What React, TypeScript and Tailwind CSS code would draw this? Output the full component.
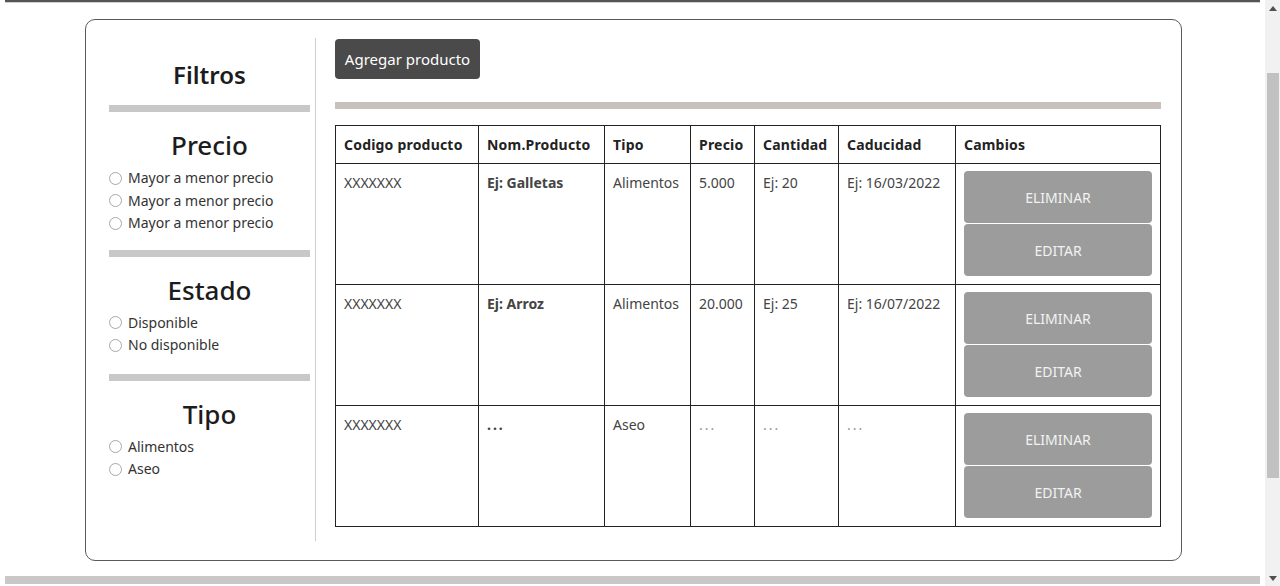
const font = { fontFamily: '"Noto Sans", "Open Sans", sans-serif' };

const Radio = ({ label }: { label: string }) => (
    <label className="flex items-center gap-[6px] text-[14px] leading-[22.5px] text-[#333]">
        <span className="h-[13px] w-[13px] rounded-full border border-[#a8a8a8] bg-white" />
        {label}
    </label>
);

const Bar = ({ className }: { className: string }) => (
    <div className={"h-[7px] bg-[#c8c8c8] " + className} />
);

const FilterGroup = ({ title, options }: { title: string; options: string[] }) => (
    <div>
        <h3 className="mt-[16px] text-center text-[26px] font-medium leading-[34px] text-[#1c1c1c]">{title}</h3>
        <div className="mt-[5px]">
            {options.map((o, i) => (
                <Radio key={i} label={o} />
            ))}
        </div>
    </div>
);

type Row = {
    codigo: string;
    nombre: string;
    tipo: string;
    precio: string;
    cantidad: string;
    caducidad: string;
    faded?: boolean;
};

const rows: Row[] = [
    { codigo: "XXXXXXX", nombre: "Ej: Galletas", tipo: "Alimentos", precio: "5.000", cantidad: "Ej: 20", caducidad: "Ej: 16/03/2022" },
    { codigo: "XXXXXXX", nombre: "Ej: Arroz", tipo: "Alimentos", precio: "20.000", cantidad: "Ej: 25", caducidad: "Ej: 16/07/2022" },
    { codigo: "XXXXXXX", nombre: "...", tipo: "Aseo", precio: "...", cantidad: "...", caducidad: "...", faded: true },
];

const headers = ["Codigo producto", "Nom.Producto", "Tipo", "Precio", "Cantidad", "Caducidad", "Cambios"];
const widths = ["w-[143px]", "w-[126px]", "w-[86px]", "w-[64px]", "w-[84px]", "w-[117px]", "w-[205px]"];

const ProductTable = () => {
    const cell = "border border-[#222] px-[8px] pt-[9px] align-top text-[14px] leading-[20px] text-[#444]";
    const dim = "border border-[#222] px-[8px] pt-[9px] align-top text-[14px] leading-[20px] text-[#999] tracking-[2px]";
    return (
        <table className="w-[825px] table-fixed border-collapse">
            <colgroup>
                {widths.map((w, i) => (
                    <col key={i} className={w} />
                ))}
            </colgroup>
            <thead>
                <tr className="h-[38px]">
                    {headers.map((h, i) => (
                        <th key={i} className="border border-[#222] px-[8px] text-left text-[14px] font-bold tracking-[0.2px] text-[#222]">
                            {h}
                        </th>
                    ))}
                </tr>
            </thead>
            <tbody>
                {rows.map((r, i) => (
                    <tr key={i} className="h-[121px]">
                        <td className={cell}>{r.codigo}</td>
                        <td className={cell + " font-bold text-[#222]" + (r.faded ? " tracking-[2px]" : "")}>{r.nombre}</td>
                        <td className={cell}>{r.tipo}</td>
                        <td className={r.faded ? dim : cell}>{r.precio}</td>
                        <td className={r.faded ? dim : cell}>{r.cantidad}</td>
                        <td className={r.faded ? dim : cell}>{r.caducidad}</td>
                        <td className="border border-[#222] px-[8px] pt-[7px] align-top">
                            <div className="flex flex-col gap-px">
                                <button className="h-[52px] rounded-[4px] bg-[#9c9c9c] text-[14px] text-[#f2f2f2]">ELIMINAR</button>
                                <button className="h-[52px] rounded-[4px] bg-[#9c9c9c] text-[14px] text-[#f2f2f2]">EDITAR</button>
                            </div>
                        </td>
                    </tr>
                ))}
            </tbody>
        </table>
    );
};

const Scrollbar = () => (
    <div className="flex w-[16px] flex-col items-center bg-[#f1f1f1]">
        <svg width="8" height="5" viewBox="0 0 8 5" className="mt-[6px]">
            <path d="M0 5 L4 0 L8 5 Z" fill="#505050" />
        </svg>
        <div className="mt-[62px] h-[405px] w-[12px] bg-[#c1c1c1]" />
        <svg width="8" height="5" viewBox="0 0 8 5" className="mt-auto mb-[5px]">
            <path d="M0 0 L4 5 L8 0 Z" fill="#505050" />
        </svg>
    </div>
);

export default function App() {
    return (
        <div className="flex h-[586px] w-[1280px] overflow-hidden bg-white" style={font}>
            <div className="flex flex-1 flex-col">
                <div className="mx-[5px] h-[3px] border-b border-[#d0d0d0] bg-[#555]" />
                <div className="pl-[85px] pr-[83px] pt-[16px]">
                    <div className="flex h-[542px] rounded-[10px] border border-[#5a5a5a] pb-[19px] pl-[23px] pr-[20px] pt-[18px]">
                        <aside className="w-[201px]">
                            <h2 className="mt-[21px] text-center text-[24px] font-semibold leading-[32px] text-[#1c1c1c]">Filtros</h2>
                            <Bar className="mt-[14px]" />
                            <FilterGroup title="Precio" options={["Mayor a menor precio", "Mayor a menor precio", "Mayor a menor precio"]} />
                            <Bar className="mt-[15px]" />
                            <FilterGroup title="Estado" options={["Disponible", "No disponible"]} />
                            <Bar className="mt-[17px]" />
                            <FilterGroup title="Tipo" options={["Alimentos", "Aseo"]} />
                        </aside>
                        <div className="ml-[5px] w-px bg-[#cfcfcf]" />
                        <main className="ml-[19px] flex-1">
                            <button className="mt-px h-[40px] w-[145px] rounded-[4px] bg-[#4a4a4a] text-[15px] text-white">
                                Agregar producto
                            </button>
                            <div className="mt-[23px] h-[7px] bg-[#c8c0bc]" />
                            <div className="mt-[16px]">
                                <ProductTable />
                            </div>
                        </main>
                    </div>
                </div>
                <div className="mx-[5px] mb-[2px] mt-auto h-[8px] bg-[#c8c8c8]" />
            </div>
            <Scrollbar />
        </div>
    );
}
